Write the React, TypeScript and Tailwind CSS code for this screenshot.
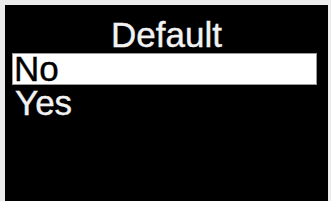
export default function App() {
  return (
    <div className="w-[331px] h-[201px] bg-[#ececec] pt-[5px] pl-[5px] pr-[3px] flex" style={{ fontFamily: '"Liberation Sans", Arial, sans-serif' }}>
      <div className="flex-1 h-full bg-black flex flex-col pt-[13px]">
        <div className="text-center text-[35px] leading-[34px] text-[#f2f2f2] h-[34px] [-webkit-text-stroke:0.4px_#f2f2f2]">Default</div>
        <div className="ml-[7px] w-[305px] mt-[1px] h-[32px] bg-white border border-[#9a9a9a] text-black text-[35px] leading-[30px] pl-[1px] [-webkit-text-stroke:0.4px_#000]">No</div>
        <div className="ml-[7px] pl-[3px] text-[35px] leading-[34px] mt-[1px] text-[#f2f2f2] [-webkit-text-stroke:0.4px_#f2f2f2]">Yes</div>
      </div>
    </div>
  );
}
